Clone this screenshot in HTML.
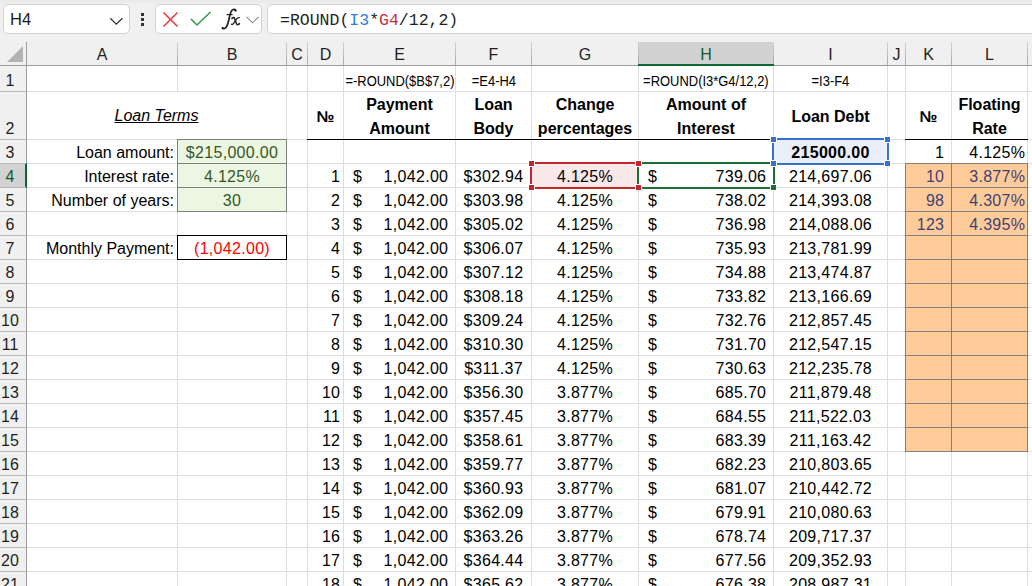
<!DOCTYPE html><html><head><meta charset="utf-8"><style>
*{margin:0;padding:0;box-sizing:border-box}
html,body{width:1032px;height:586px;overflow:hidden;background:#fff}
body{position:relative;font-family:"Liberation Sans",sans-serif;color:#000}
.a{position:absolute}
.t{position:absolute;white-space:nowrap;font-size:16px;line-height:24px}
.n{letter-spacing:0.3px}
.hd{position:absolute;white-space:nowrap;font-size:16px;color:#1f1f1f;text-align:center}
</style></head><body>
<div class="a" style="left:0;top:0;width:1032px;height:65px;background:linear-gradient(#eaeaea 0px,#eaeaea 2px,#efefef 3px,#f0f0f0 4px)"></div>
<div class="a" style="left:3px;top:4px;width:127px;height:30px;background:#fff;border:1px solid #d1d1d1;border-radius:5px"></div>
<div class="t" style="left:10px;top:7px;line-height:24px;font-size:16.5px;color:#1a1a1a">H4</div>
<svg class="a" style="left:108px;top:14px" width="16" height="12" viewBox="0 0 16 12"><path d="M2.3 4.3 L8.3 10.1 L14.4 4.3" fill="none" stroke="#333" stroke-width="1.3"/></svg>
<div class="a" style="left:141px;top:13px;width:3px;height:3px;background:#333"></div>
<div class="a" style="left:141px;top:18px;width:3px;height:3px;background:#333"></div>
<div class="a" style="left:141px;top:23px;width:3px;height:3px;background:#333"></div>
<div class="a" style="left:155px;top:4px;width:107px;height:30px;background:#fff;border:1px solid #d1d1d1;border-radius:5px"></div>
<svg class="a" style="left:162px;top:11px" width="17" height="17" viewBox="0 0 17 17"><path d="M1.5 1.5 L15.5 15.5 M15.5 1.5 L1.5 15.5" fill="none" stroke="#e5383b" stroke-width="1.5"/></svg>
<svg class="a" style="left:190px;top:11px" width="22" height="16" viewBox="0 0 22 16"><path d="M1 8 L7 14 L20.5 1" fill="none" stroke="#3a9b4b" stroke-width="1.6"/></svg>
<svg class="a" style="left:216px;top:4px" width="30" height="30" viewBox="0 0 30 30"><path d="M19.9 6.6 C19.6 5.2 17.8 4.8 16.4 5.9 C14.9 7.1 14.2 9.6 13.4 13.2 C12.6 17 11.8 20.8 10.3 23 C9.3 24.6 7.9 25 6.6 24.4" fill="none" stroke="#262626" stroke-width="1.75" stroke-linecap="round"/><circle cx="19.3" cy="6.5" r="1.05" fill="#262626"/><circle cx="6.6" cy="23.9" r="1.05" fill="#262626"/><path d="M10.6 10.6 L16.6 10.6" stroke="#262626" stroke-width="1.3"/><path d="M15.9 14.3 C17.3 13.2 18.3 13.4 18.8 15 L20.4 19.6 C20.9 21 22 21.2 23.4 19.6" fill="none" stroke="#262626" stroke-width="1.6" stroke-linecap="round"/><path d="M23.4 13.6 C22.3 13.3 21.5 13.9 20.6 15 L17.6 19.4 C16.8 20.6 16.2 20.8 15.5 20.2" fill="none" stroke="#262626" stroke-width="1.3" stroke-linecap="round"/></svg>
<svg class="a" style="left:246px;top:16px" width="13" height="8" viewBox="0 0 13 8"><path d="M0.5 0.8 L6.5 6.8 L12.5 0.8" fill="none" stroke="#8a8a8a" stroke-width="1.1"/></svg>
<div class="a" style="left:267px;top:4px;width:800px;height:30px;background:#fff;border:1px solid #d1d1d1;border-radius:5px"></div>
<div class="t" style="left:280px;top:9px;font-family:'Liberation Mono',monospace;font-size:16.5px;line-height:24px;color:#1f1f1f">=ROUND(<span style="color:#2f7ed8">I3</span>*<span style="color:#c3313f">G4</span>/12,2)</div>
<svg class="a" style="left:0;top:42px" width="26" height="23" viewBox="0 0 26 23"><path d="M23 4 L23 20 L7 20 Z" fill="#b3b3b3"/></svg>
<div class="a" style="left:639px;top:42px;width:134px;height:22px;background:#d2d2d2"></div>
<div class="a" style="left:26px;top:42px;width:1px;height:23px;background:linear-gradient(#d2d2d2,#a8a8a8)"></div>
<div class="a" style="left:177px;top:42px;width:1px;height:23px;background:linear-gradient(#d2d2d2,#a8a8a8)"></div>
<div class="a" style="left:286px;top:42px;width:1px;height:23px;background:linear-gradient(#d2d2d2,#a8a8a8)"></div>
<div class="a" style="left:307px;top:42px;width:1px;height:23px;background:linear-gradient(#d2d2d2,#a8a8a8)"></div>
<div class="a" style="left:343px;top:42px;width:1px;height:23px;background:linear-gradient(#d2d2d2,#a8a8a8)"></div>
<div class="a" style="left:455px;top:42px;width:1px;height:23px;background:linear-gradient(#d2d2d2,#a8a8a8)"></div>
<div class="a" style="left:531px;top:42px;width:1px;height:23px;background:linear-gradient(#d2d2d2,#a8a8a8)"></div>
<div class="a" style="left:638px;top:42px;width:1px;height:23px;background:linear-gradient(#d2d2d2,#a8a8a8)"></div>
<div class="a" style="left:773px;top:42px;width:1px;height:23px;background:linear-gradient(#d2d2d2,#a8a8a8)"></div>
<div class="a" style="left:887px;top:42px;width:1px;height:23px;background:linear-gradient(#d2d2d2,#a8a8a8)"></div>
<div class="a" style="left:905px;top:42px;width:1px;height:23px;background:linear-gradient(#d2d2d2,#a8a8a8)"></div>
<div class="a" style="left:951px;top:42px;width:1px;height:23px;background:linear-gradient(#d2d2d2,#a8a8a8)"></div>
<div class="a" style="left:1027px;top:42px;width:1px;height:23px;background:linear-gradient(#d2d2d2,#a8a8a8)"></div>
<div class="a" style="left:0;top:65px;width:1032px;height:1px;background:#9e9e9e"></div>
<div class="a" style="left:638px;top:64px;width:136px;height:2px;background:#0f6633"></div>
<div class="hd" style="left:27px;top:43px;width:150px;line-height:23px;color:#1f1f1f">A</div>
<div class="hd" style="left:178px;top:43px;width:108px;line-height:23px;color:#1f1f1f">B</div>
<div class="hd" style="left:287px;top:43px;width:20px;line-height:23px;color:#1f1f1f">C</div>
<div class="hd" style="left:308px;top:43px;width:35px;line-height:23px;color:#1f1f1f">D</div>
<div class="hd" style="left:344px;top:43px;width:111px;line-height:23px;color:#1f1f1f">E</div>
<div class="hd" style="left:456px;top:43px;width:75px;line-height:23px;color:#1f1f1f">F</div>
<div class="hd" style="left:532px;top:43px;width:106px;line-height:23px;color:#1f1f1f">G</div>
<div class="hd" style="left:639px;top:43px;width:134px;line-height:23px;color:#0e5c2f">H</div>
<div class="hd" style="left:774px;top:43px;width:113px;line-height:23px;color:#1f1f1f">I</div>
<div class="hd" style="left:888px;top:43px;width:17px;line-height:23px;color:#1f1f1f">J</div>
<div class="hd" style="left:906px;top:43px;width:45px;line-height:23px;color:#1f1f1f">K</div>
<div class="hd" style="left:952px;top:43px;width:75px;line-height:23px;color:#1f1f1f">L</div>
<div class="a" style="left:0;top:66px;width:26px;height:520px;background:#f0f0f0"></div>
<div class="a" style="left:0;top:164px;width:26px;height:23px;background:#d2d2d2"></div>
<div class="a" style="left:26px;top:42px;width:1px;height:544px;background:#9e9e9e"></div>
<div class="a" style="left:25px;top:163px;width:2px;height:25px;background:#0f6633"></div>
<div class="a" style="left:0;top:91px;width:26px;height:1px;background:#bababa"></div>
<div class="hd" style="left:0;top:69px;width:20px;line-height:24px;color:#1f1f1f">1</div>
<div class="a" style="left:0;top:139px;width:26px;height:1px;background:#bababa"></div>
<div class="hd" style="left:0;top:117px;width:20px;line-height:24px;color:#1f1f1f">2</div>
<div class="a" style="left:0;top:163px;width:26px;height:1px;background:#bababa"></div>
<div class="hd" style="left:0;top:141px;width:20px;line-height:24px;color:#1f1f1f">3</div>
<div class="a" style="left:0;top:187px;width:26px;height:1px;background:#bababa"></div>
<div class="hd" style="left:0;top:165px;width:20px;line-height:24px;color:#0e5c2f">4</div>
<div class="a" style="left:0;top:211px;width:26px;height:1px;background:#bababa"></div>
<div class="hd" style="left:0;top:189px;width:20px;line-height:24px;color:#1f1f1f">5</div>
<div class="a" style="left:0;top:235px;width:26px;height:1px;background:#bababa"></div>
<div class="hd" style="left:0;top:213px;width:20px;line-height:24px;color:#1f1f1f">6</div>
<div class="a" style="left:0;top:259px;width:26px;height:1px;background:#bababa"></div>
<div class="hd" style="left:0;top:237px;width:20px;line-height:24px;color:#1f1f1f">7</div>
<div class="a" style="left:0;top:283px;width:26px;height:1px;background:#bababa"></div>
<div class="hd" style="left:0;top:261px;width:20px;line-height:24px;color:#1f1f1f">8</div>
<div class="a" style="left:0;top:307px;width:26px;height:1px;background:#bababa"></div>
<div class="hd" style="left:0;top:285px;width:20px;line-height:24px;color:#1f1f1f">9</div>
<div class="a" style="left:0;top:331px;width:26px;height:1px;background:#bababa"></div>
<div class="hd" style="left:0;top:309px;width:20px;line-height:24px;color:#1f1f1f">10</div>
<div class="a" style="left:0;top:355px;width:26px;height:1px;background:#bababa"></div>
<div class="hd" style="left:0;top:333px;width:20px;line-height:24px;color:#1f1f1f">11</div>
<div class="a" style="left:0;top:379px;width:26px;height:1px;background:#bababa"></div>
<div class="hd" style="left:0;top:357px;width:20px;line-height:24px;color:#1f1f1f">12</div>
<div class="a" style="left:0;top:403px;width:26px;height:1px;background:#bababa"></div>
<div class="hd" style="left:0;top:381px;width:20px;line-height:24px;color:#1f1f1f">13</div>
<div class="a" style="left:0;top:427px;width:26px;height:1px;background:#bababa"></div>
<div class="hd" style="left:0;top:405px;width:20px;line-height:24px;color:#1f1f1f">14</div>
<div class="a" style="left:0;top:451px;width:26px;height:1px;background:#bababa"></div>
<div class="hd" style="left:0;top:429px;width:20px;line-height:24px;color:#1f1f1f">15</div>
<div class="a" style="left:0;top:475px;width:26px;height:1px;background:#bababa"></div>
<div class="hd" style="left:0;top:453px;width:20px;line-height:24px;color:#1f1f1f">16</div>
<div class="a" style="left:0;top:499px;width:26px;height:1px;background:#bababa"></div>
<div class="hd" style="left:0;top:477px;width:20px;line-height:24px;color:#1f1f1f">17</div>
<div class="a" style="left:0;top:523px;width:26px;height:1px;background:#bababa"></div>
<div class="hd" style="left:0;top:501px;width:20px;line-height:24px;color:#1f1f1f">18</div>
<div class="a" style="left:0;top:547px;width:26px;height:1px;background:#bababa"></div>
<div class="hd" style="left:0;top:525px;width:20px;line-height:24px;color:#1f1f1f">19</div>
<div class="a" style="left:0;top:571px;width:26px;height:1px;background:#bababa"></div>
<div class="hd" style="left:0;top:549px;width:20px;line-height:24px;color:#1f1f1f">20</div>
<div class="a" style="left:0;top:595px;width:26px;height:1px;background:#bababa"></div>
<div class="hd" style="left:0;top:573px;width:20px;line-height:24px;color:#1f1f1f">21</div>
<div class="a" style="left:177px;top:66px;width:1px;height:520px;background:#dedede"></div>
<div class="a" style="left:286px;top:66px;width:1px;height:520px;background:#dedede"></div>
<div class="a" style="left:307px;top:66px;width:1px;height:520px;background:#dedede"></div>
<div class="a" style="left:343px;top:66px;width:1px;height:520px;background:#dedede"></div>
<div class="a" style="left:455px;top:66px;width:1px;height:520px;background:#dedede"></div>
<div class="a" style="left:531px;top:66px;width:1px;height:520px;background:#dedede"></div>
<div class="a" style="left:638px;top:66px;width:1px;height:520px;background:#dedede"></div>
<div class="a" style="left:773px;top:66px;width:1px;height:520px;background:#dedede"></div>
<div class="a" style="left:887px;top:66px;width:1px;height:520px;background:#dedede"></div>
<div class="a" style="left:905px;top:66px;width:1px;height:520px;background:#dedede"></div>
<div class="a" style="left:951px;top:66px;width:1px;height:520px;background:#dedede"></div>
<div class="a" style="left:1027px;top:66px;width:1px;height:520px;background:#dedede"></div>
<div class="a" style="left:27px;top:91px;width:1005px;height:1px;background:#dedede"></div>
<div class="a" style="left:27px;top:139px;width:1005px;height:1px;background:#dedede"></div>
<div class="a" style="left:27px;top:163px;width:1005px;height:1px;background:#dedede"></div>
<div class="a" style="left:27px;top:187px;width:1005px;height:1px;background:#dedede"></div>
<div class="a" style="left:27px;top:211px;width:1005px;height:1px;background:#dedede"></div>
<div class="a" style="left:27px;top:235px;width:1005px;height:1px;background:#dedede"></div>
<div class="a" style="left:27px;top:259px;width:1005px;height:1px;background:#dedede"></div>
<div class="a" style="left:27px;top:283px;width:1005px;height:1px;background:#dedede"></div>
<div class="a" style="left:27px;top:307px;width:1005px;height:1px;background:#dedede"></div>
<div class="a" style="left:27px;top:331px;width:1005px;height:1px;background:#dedede"></div>
<div class="a" style="left:27px;top:355px;width:1005px;height:1px;background:#dedede"></div>
<div class="a" style="left:27px;top:379px;width:1005px;height:1px;background:#dedede"></div>
<div class="a" style="left:27px;top:403px;width:1005px;height:1px;background:#dedede"></div>
<div class="a" style="left:27px;top:427px;width:1005px;height:1px;background:#dedede"></div>
<div class="a" style="left:27px;top:451px;width:1005px;height:1px;background:#dedede"></div>
<div class="a" style="left:27px;top:475px;width:1005px;height:1px;background:#dedede"></div>
<div class="a" style="left:27px;top:499px;width:1005px;height:1px;background:#dedede"></div>
<div class="a" style="left:27px;top:523px;width:1005px;height:1px;background:#dedede"></div>
<div class="a" style="left:27px;top:547px;width:1005px;height:1px;background:#dedede"></div>
<div class="a" style="left:27px;top:571px;width:1005px;height:1px;background:#dedede"></div>
<div class="a" style="left:27px;top:595px;width:1005px;height:1px;background:#dedede"></div>
<div class="a" style="left:177px;top:92px;width:1px;height:47px;background:#fff"></div>
<div class="a" style="left:177px;top:139px;width:110px;height:73px;background:#ebf7e3;border:1px solid #7f7f7f"></div>
<div class="a" style="left:178px;top:163px;width:108px;height:1px;background:#7f7f7f"></div>
<div class="a" style="left:178px;top:187px;width:108px;height:1px;background:#7f7f7f"></div>
<div class="a" style="left:177px;top:235px;width:110px;height:25px;border:1px solid #000"></div>
<div class="a" style="left:905px;top:163px;width:123px;height:289px;background:#ffcc99;border:1px solid #7f7f7f"></div>
<div class="a" style="left:951px;top:164px;width:1px;height:287px;background:#7f7f7f"></div>
<div class="a" style="left:906px;top:187px;width:121px;height:1px;background:#7f7f7f"></div>
<div class="a" style="left:906px;top:211px;width:121px;height:1px;background:#7f7f7f"></div>
<div class="a" style="left:906px;top:235px;width:121px;height:1px;background:#7f7f7f"></div>
<div class="a" style="left:906px;top:259px;width:121px;height:1px;background:#7f7f7f"></div>
<div class="a" style="left:906px;top:283px;width:121px;height:1px;background:#7f7f7f"></div>
<div class="a" style="left:906px;top:307px;width:121px;height:1px;background:#7f7f7f"></div>
<div class="a" style="left:906px;top:331px;width:121px;height:1px;background:#7f7f7f"></div>
<div class="a" style="left:906px;top:355px;width:121px;height:1px;background:#7f7f7f"></div>
<div class="a" style="left:906px;top:379px;width:121px;height:1px;background:#7f7f7f"></div>
<div class="a" style="left:906px;top:403px;width:121px;height:1px;background:#7f7f7f"></div>
<div class="a" style="left:906px;top:427px;width:121px;height:1px;background:#7f7f7f"></div>
<div class="a" style="left:307px;top:139px;width:467px;height:1px;background:#000"></div>
<div class="a" style="left:905px;top:139px;width:123px;height:1px;background:#000"></div>
<div class="t" style="left:299.5px;width:200px;top:69px;text-align:center;font-size:14px;color:#000"><span style="display:inline-block;transform:scaleX(0.925)">=-ROUND($B$7,2)</span></div>
<div class="t" style="left:393.5px;width:200px;top:69px;text-align:center;font-size:14px;color:#000"><span style="display:inline-block;transform:scaleX(0.925)">=E4-H4</span></div>
<div class="t" style="left:606.0px;width:200px;top:69px;text-align:center;font-size:14px;color:#000"><span style="display:inline-block;transform:scaleX(0.925)">=ROUND(I3*G4/12,2)</span></div>
<div class="t" style="left:730.5px;width:200px;top:69px;text-align:center;font-size:14px;color:#000"><span style="display:inline-block;transform:scaleX(0.925)">=I3-F4</span></div>
<div class="t" style="left:27px;width:259px;top:104px;text-align:center;font-style:italic;text-decoration:underline">Loan Terms</div>
<div class="t" style="left:307px;width:37px;top:105px;text-align:center;font-weight:bold">№</div>
<div class="t" style="left:343px;width:113px;top:93px;text-align:center;font-weight:bold;line-height:24px">Payment<br>Amount</div>
<div class="t" style="left:455px;width:77px;top:93px;text-align:center;font-weight:bold;line-height:24px">Loan<br>Body</div>
<div class="t" style="left:531px;width:108px;top:93px;text-align:center;font-weight:bold;line-height:24px">Change<br>percentages</div>
<div class="t" style="left:638px;width:136px;top:93px;text-align:center;font-weight:bold;line-height:24px">Amount of<br>Interest</div>
<div class="t" style="left:773px;width:115px;top:105px;text-align:center;font-weight:bold">Loan Debt</div>
<div class="t" style="left:905px;width:47px;top:105px;text-align:center;font-weight:bold">№</div>
<div class="t" style="left:951px;width:77px;top:93px;text-align:center;font-weight:bold;line-height:24px">Floating<br>Rate</div>
<div class="t" style="left:26px;width:148px;top:141px;text-align:right;">Loan amount:</div>
<div class="t" style="left:26px;width:148px;top:165px;text-align:right;">Interest rate:</div>
<div class="t" style="left:26px;width:148px;top:189px;text-align:right;">Number of years:</div>
<div class="t" style="left:26px;width:148px;top:237px;text-align:right;">Monthly Payment:</div>
<div class="t n" style="left:177px;width:110px;top:141px;text-align:center;color:#375623">$215,000.00</div>
<div class="t n" style="left:177px;width:110px;top:165px;text-align:center;color:#375623">4.125%</div>
<div class="t n" style="left:177px;width:110px;top:189px;text-align:center;color:#375623">30</div>
<div class="t n" style="left:177px;width:110px;top:237px;text-align:center;color:#ff0000">(1,042.00)</div>
<div class="a" style="left:772px;top:138px;width:117px;height:27px;background:#e9eef9;border:2px solid #3b6fcf"></div>
<div class="t n" style="left:773px;width:115px;top:141px;text-align:center;font-weight:bold">215000.00</div>
<div class="a" style="left:530px;top:162px;width:109px;height:27px;background:#f9e8ea;border:2px solid #c1272d"></div>
<div class="a" style="left:637px;top:162px;width:138px;height:27px;border:2px solid #1e6e38"></div>
<div class="a" style="left:529px;top:161px;width:5px;height:5px;background:#c1272d;box-shadow:0 0 0 1px #fff"></div>
<div class="a" style="left:636px;top:161px;width:5px;height:5px;background:#c1272d;box-shadow:0 0 0 1px #fff"></div>
<div class="a" style="left:529px;top:185px;width:5px;height:5px;background:#c1272d;box-shadow:0 0 0 1px #fff"></div>
<div class="a" style="left:636px;top:185px;width:5px;height:5px;background:#c1272d;box-shadow:0 0 0 1px #fff"></div>
<div class="a" style="left:771px;top:137px;width:5px;height:5px;background:#3b6fcf;box-shadow:0 0 0 1px #fff"></div>
<div class="a" style="left:885px;top:137px;width:5px;height:5px;background:#3b6fcf;box-shadow:0 0 0 1px #fff"></div>
<div class="a" style="left:771px;top:161px;width:5px;height:5px;background:#3b6fcf;box-shadow:0 0 0 1px #fff"></div>
<div class="a" style="left:885px;top:161px;width:5px;height:5px;background:#3b6fcf;box-shadow:0 0 0 1px #fff"></div>
<div class="a" style="left:771px;top:185px;width:5px;height:5px;background:#1e6e38;box-shadow:0 0 0 1px #fff"></div>
<div class="t n" style="left:905px;width:39.3px;top:141px;text-align:right;">1</div>
<div class="t n" style="left:951px;width:74.3px;top:141px;text-align:right;">4.125%</div>
<div class="t n" style="left:905px;width:39.3px;top:165px;text-align:right;color:#3f3f76">10</div>
<div class="t n" style="left:951px;width:74.3px;top:165px;text-align:right;color:#3f3f76">3.877%</div>
<div class="t n" style="left:905px;width:39.3px;top:189px;text-align:right;color:#3f3f76">98</div>
<div class="t n" style="left:951px;width:74.3px;top:189px;text-align:right;color:#3f3f76">4.307%</div>
<div class="t n" style="left:905px;width:39.3px;top:213px;text-align:right;color:#3f3f76">123</div>
<div class="t n" style="left:951px;width:74.3px;top:213px;text-align:right;color:#3f3f76">4.395%</div>
<div class="t n" style="left:307px;width:33.3px;top:165px;text-align:right;">1</div>
<div class="t" style="left:353px;top:165px;">$</div>
<div class="t n" style="left:343px;width:105.3px;top:165px;text-align:right;">1,042.00</div>
<div class="t n" style="left:455px;width:77px;top:165px;text-align:center;">$302.94</div>
<div class="t n" style="left:531px;width:108px;top:165px;text-align:center;">4.125%</div>
<div class="t" style="left:648px;top:165px;">$</div>
<div class="t n" style="left:638px;width:128.3px;top:165px;text-align:right;">739.06</div>
<div class="t n" style="left:773px;width:115px;top:165px;text-align:center;">214,697.06</div>
<div class="t n" style="left:307px;width:33.3px;top:189px;text-align:right;">2</div>
<div class="t" style="left:353px;top:189px;">$</div>
<div class="t n" style="left:343px;width:105.3px;top:189px;text-align:right;">1,042.00</div>
<div class="t n" style="left:455px;width:77px;top:189px;text-align:center;">$303.98</div>
<div class="t n" style="left:531px;width:108px;top:189px;text-align:center;">4.125%</div>
<div class="t" style="left:648px;top:189px;">$</div>
<div class="t n" style="left:638px;width:128.3px;top:189px;text-align:right;">738.02</div>
<div class="t n" style="left:773px;width:115px;top:189px;text-align:center;">214,393.08</div>
<div class="t n" style="left:307px;width:33.3px;top:213px;text-align:right;">3</div>
<div class="t" style="left:353px;top:213px;">$</div>
<div class="t n" style="left:343px;width:105.3px;top:213px;text-align:right;">1,042.00</div>
<div class="t n" style="left:455px;width:77px;top:213px;text-align:center;">$305.02</div>
<div class="t n" style="left:531px;width:108px;top:213px;text-align:center;">4.125%</div>
<div class="t" style="left:648px;top:213px;">$</div>
<div class="t n" style="left:638px;width:128.3px;top:213px;text-align:right;">736.98</div>
<div class="t n" style="left:773px;width:115px;top:213px;text-align:center;">214,088.06</div>
<div class="t n" style="left:307px;width:33.3px;top:237px;text-align:right;">4</div>
<div class="t" style="left:353px;top:237px;">$</div>
<div class="t n" style="left:343px;width:105.3px;top:237px;text-align:right;">1,042.00</div>
<div class="t n" style="left:455px;width:77px;top:237px;text-align:center;">$306.07</div>
<div class="t n" style="left:531px;width:108px;top:237px;text-align:center;">4.125%</div>
<div class="t" style="left:648px;top:237px;">$</div>
<div class="t n" style="left:638px;width:128.3px;top:237px;text-align:right;">735.93</div>
<div class="t n" style="left:773px;width:115px;top:237px;text-align:center;">213,781.99</div>
<div class="t n" style="left:307px;width:33.3px;top:261px;text-align:right;">5</div>
<div class="t" style="left:353px;top:261px;">$</div>
<div class="t n" style="left:343px;width:105.3px;top:261px;text-align:right;">1,042.00</div>
<div class="t n" style="left:455px;width:77px;top:261px;text-align:center;">$307.12</div>
<div class="t n" style="left:531px;width:108px;top:261px;text-align:center;">4.125%</div>
<div class="t" style="left:648px;top:261px;">$</div>
<div class="t n" style="left:638px;width:128.3px;top:261px;text-align:right;">734.88</div>
<div class="t n" style="left:773px;width:115px;top:261px;text-align:center;">213,474.87</div>
<div class="t n" style="left:307px;width:33.3px;top:285px;text-align:right;">6</div>
<div class="t" style="left:353px;top:285px;">$</div>
<div class="t n" style="left:343px;width:105.3px;top:285px;text-align:right;">1,042.00</div>
<div class="t n" style="left:455px;width:77px;top:285px;text-align:center;">$308.18</div>
<div class="t n" style="left:531px;width:108px;top:285px;text-align:center;">4.125%</div>
<div class="t" style="left:648px;top:285px;">$</div>
<div class="t n" style="left:638px;width:128.3px;top:285px;text-align:right;">733.82</div>
<div class="t n" style="left:773px;width:115px;top:285px;text-align:center;">213,166.69</div>
<div class="t n" style="left:307px;width:33.3px;top:309px;text-align:right;">7</div>
<div class="t" style="left:353px;top:309px;">$</div>
<div class="t n" style="left:343px;width:105.3px;top:309px;text-align:right;">1,042.00</div>
<div class="t n" style="left:455px;width:77px;top:309px;text-align:center;">$309.24</div>
<div class="t n" style="left:531px;width:108px;top:309px;text-align:center;">4.125%</div>
<div class="t" style="left:648px;top:309px;">$</div>
<div class="t n" style="left:638px;width:128.3px;top:309px;text-align:right;">732.76</div>
<div class="t n" style="left:773px;width:115px;top:309px;text-align:center;">212,857.45</div>
<div class="t n" style="left:307px;width:33.3px;top:333px;text-align:right;">8</div>
<div class="t" style="left:353px;top:333px;">$</div>
<div class="t n" style="left:343px;width:105.3px;top:333px;text-align:right;">1,042.00</div>
<div class="t n" style="left:455px;width:77px;top:333px;text-align:center;">$310.30</div>
<div class="t n" style="left:531px;width:108px;top:333px;text-align:center;">4.125%</div>
<div class="t" style="left:648px;top:333px;">$</div>
<div class="t n" style="left:638px;width:128.3px;top:333px;text-align:right;">731.70</div>
<div class="t n" style="left:773px;width:115px;top:333px;text-align:center;">212,547.15</div>
<div class="t n" style="left:307px;width:33.3px;top:357px;text-align:right;">9</div>
<div class="t" style="left:353px;top:357px;">$</div>
<div class="t n" style="left:343px;width:105.3px;top:357px;text-align:right;">1,042.00</div>
<div class="t n" style="left:455px;width:77px;top:357px;text-align:center;">$311.37</div>
<div class="t n" style="left:531px;width:108px;top:357px;text-align:center;">4.125%</div>
<div class="t" style="left:648px;top:357px;">$</div>
<div class="t n" style="left:638px;width:128.3px;top:357px;text-align:right;">730.63</div>
<div class="t n" style="left:773px;width:115px;top:357px;text-align:center;">212,235.78</div>
<div class="t n" style="left:307px;width:33.3px;top:381px;text-align:right;">10</div>
<div class="t" style="left:353px;top:381px;">$</div>
<div class="t n" style="left:343px;width:105.3px;top:381px;text-align:right;">1,042.00</div>
<div class="t n" style="left:455px;width:77px;top:381px;text-align:center;">$356.30</div>
<div class="t n" style="left:531px;width:108px;top:381px;text-align:center;">3.877%</div>
<div class="t" style="left:648px;top:381px;">$</div>
<div class="t n" style="left:638px;width:128.3px;top:381px;text-align:right;">685.70</div>
<div class="t n" style="left:773px;width:115px;top:381px;text-align:center;">211,879.48</div>
<div class="t n" style="left:307px;width:33.3px;top:405px;text-align:right;">11</div>
<div class="t" style="left:353px;top:405px;">$</div>
<div class="t n" style="left:343px;width:105.3px;top:405px;text-align:right;">1,042.00</div>
<div class="t n" style="left:455px;width:77px;top:405px;text-align:center;">$357.45</div>
<div class="t n" style="left:531px;width:108px;top:405px;text-align:center;">3.877%</div>
<div class="t" style="left:648px;top:405px;">$</div>
<div class="t n" style="left:638px;width:128.3px;top:405px;text-align:right;">684.55</div>
<div class="t n" style="left:773px;width:115px;top:405px;text-align:center;">211,522.03</div>
<div class="t n" style="left:307px;width:33.3px;top:429px;text-align:right;">12</div>
<div class="t" style="left:353px;top:429px;">$</div>
<div class="t n" style="left:343px;width:105.3px;top:429px;text-align:right;">1,042.00</div>
<div class="t n" style="left:455px;width:77px;top:429px;text-align:center;">$358.61</div>
<div class="t n" style="left:531px;width:108px;top:429px;text-align:center;">3.877%</div>
<div class="t" style="left:648px;top:429px;">$</div>
<div class="t n" style="left:638px;width:128.3px;top:429px;text-align:right;">683.39</div>
<div class="t n" style="left:773px;width:115px;top:429px;text-align:center;">211,163.42</div>
<div class="t n" style="left:307px;width:33.3px;top:453px;text-align:right;">13</div>
<div class="t" style="left:353px;top:453px;">$</div>
<div class="t n" style="left:343px;width:105.3px;top:453px;text-align:right;">1,042.00</div>
<div class="t n" style="left:455px;width:77px;top:453px;text-align:center;">$359.77</div>
<div class="t n" style="left:531px;width:108px;top:453px;text-align:center;">3.877%</div>
<div class="t" style="left:648px;top:453px;">$</div>
<div class="t n" style="left:638px;width:128.3px;top:453px;text-align:right;">682.23</div>
<div class="t n" style="left:773px;width:115px;top:453px;text-align:center;">210,803.65</div>
<div class="t n" style="left:307px;width:33.3px;top:477px;text-align:right;">14</div>
<div class="t" style="left:353px;top:477px;">$</div>
<div class="t n" style="left:343px;width:105.3px;top:477px;text-align:right;">1,042.00</div>
<div class="t n" style="left:455px;width:77px;top:477px;text-align:center;">$360.93</div>
<div class="t n" style="left:531px;width:108px;top:477px;text-align:center;">3.877%</div>
<div class="t" style="left:648px;top:477px;">$</div>
<div class="t n" style="left:638px;width:128.3px;top:477px;text-align:right;">681.07</div>
<div class="t n" style="left:773px;width:115px;top:477px;text-align:center;">210,442.72</div>
<div class="t n" style="left:307px;width:33.3px;top:501px;text-align:right;">15</div>
<div class="t" style="left:353px;top:501px;">$</div>
<div class="t n" style="left:343px;width:105.3px;top:501px;text-align:right;">1,042.00</div>
<div class="t n" style="left:455px;width:77px;top:501px;text-align:center;">$362.09</div>
<div class="t n" style="left:531px;width:108px;top:501px;text-align:center;">3.877%</div>
<div class="t" style="left:648px;top:501px;">$</div>
<div class="t n" style="left:638px;width:128.3px;top:501px;text-align:right;">679.91</div>
<div class="t n" style="left:773px;width:115px;top:501px;text-align:center;">210,080.63</div>
<div class="t n" style="left:307px;width:33.3px;top:525px;text-align:right;">16</div>
<div class="t" style="left:353px;top:525px;">$</div>
<div class="t n" style="left:343px;width:105.3px;top:525px;text-align:right;">1,042.00</div>
<div class="t n" style="left:455px;width:77px;top:525px;text-align:center;">$363.26</div>
<div class="t n" style="left:531px;width:108px;top:525px;text-align:center;">3.877%</div>
<div class="t" style="left:648px;top:525px;">$</div>
<div class="t n" style="left:638px;width:128.3px;top:525px;text-align:right;">678.74</div>
<div class="t n" style="left:773px;width:115px;top:525px;text-align:center;">209,717.37</div>
<div class="t n" style="left:307px;width:33.3px;top:549px;text-align:right;">17</div>
<div class="t" style="left:353px;top:549px;">$</div>
<div class="t n" style="left:343px;width:105.3px;top:549px;text-align:right;">1,042.00</div>
<div class="t n" style="left:455px;width:77px;top:549px;text-align:center;">$364.44</div>
<div class="t n" style="left:531px;width:108px;top:549px;text-align:center;">3.877%</div>
<div class="t" style="left:648px;top:549px;">$</div>
<div class="t n" style="left:638px;width:128.3px;top:549px;text-align:right;">677.56</div>
<div class="t n" style="left:773px;width:115px;top:549px;text-align:center;">209,352.93</div>
<div class="t n" style="left:307px;width:33.3px;top:573px;text-align:right;">18</div>
<div class="t" style="left:353px;top:573px;">$</div>
<div class="t n" style="left:343px;width:105.3px;top:573px;text-align:right;">1,042.00</div>
<div class="t n" style="left:455px;width:77px;top:573px;text-align:center;">$365.62</div>
<div class="t n" style="left:531px;width:108px;top:573px;text-align:center;">3.877%</div>
<div class="t" style="left:648px;top:573px;">$</div>
<div class="t n" style="left:638px;width:128.3px;top:573px;text-align:right;">676.38</div>
<div class="t n" style="left:773px;width:115px;top:573px;text-align:center;">208,987.31</div>
</body></html>
